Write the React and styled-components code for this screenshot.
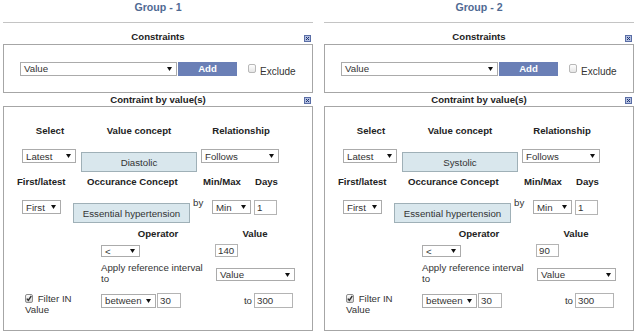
import styled, { createGlobalStyle } from 'styled-components';

const Global = createGlobalStyle`
  html, body { margin: 0; padding: 0; background: #fff; }
  body { font-family: "Liberation Sans", Arial, sans-serif; color: #222; }
`;

const Page = styled.div`
  display: flex;
  gap: 11px;
  padding-left: 3px;
  width: 636px;
  height: 333px;
  box-sizing: border-box;
  overflow: hidden;
`;

const Panel = styled.section`
  width: 310px;
  display: flex;
  flex-direction: column;
`;

const GroupTitle = styled.h2`
  margin: 0;
  height: 23px;
  box-sizing: border-box;
  border-bottom: 1px solid #c4c4c4;
  text-align: center;
  font-size: 10.6px;
  line-height: 14px;
  font-weight: bold;
  color: #4f6a93;
`;

const SectionHead = styled.div`
  position: relative;
  height: ${p => p.$h}px;
  display: flex;
  align-items: flex-end;
  justify-content: center;
  font-size: 9.6px;
  font-weight: bold;
  line-height: ${p => Math.min(p.$h, 14)}px;
  color: #222;
`;

const Close = styled.span`
  position: absolute;
  right: 2px;
  bottom: 5px;
  width: 7px;
  height: 7px;
  display: block;
`;

const Box = styled.div`
  height: ${p => p.$h}px;
  box-sizing: border-box;
  border: 1px solid #a6a6a6;
`;

const ConstraintBar = styled.div`
  height: 100%;
  display: flex;
  align-items: center;
  padding-left: 16px;
`;

const SelectBox = styled.div`
  grid-column: ${p => p.$col || 'auto'};
  width: ${p => p.$w}px;
  height: ${p => p.$h || 14}px;
  margin-top: ${p => p.$mt || 0}px;
  margin-left: ${p => p.$ml || 0}px;
  box-sizing: border-box;
  border: 1px solid #ababab;
  background: #fff;
  display: flex;
  align-items: center;
  justify-content: space-between;
  padding: 0 4px 0 3px;
  font-size: 9.7px;
  color: #333;
  svg { flex: none; }
`;

const AddButton = styled.button`
  width: 59px;
  height: 14px;
  margin-left: 1px;
  padding: 0;
  border: none;
  background: #6a7fb6;
  color: #fff;
  font-family: inherit;
  font-weight: bold;
  font-size: 9.6px;
`;

const Tick = styled.span`
  display: inline-block;
  vertical-align: -1px;
  width: 8px;
  height: 9px;
  margin-left: ${p => p.$ml || 0}px;
  margin-right: ${p => p.$mr || 0}px;
  flex: none;
  svg { display: block; }
`;

const Exclude = styled.span`
  margin: 5px 0 0 4px;
  font-size: 10px;
  color: #333;
`;

const ValueBox = styled.div`
  height: 225px;
  box-sizing: border-box;
  border: 1px solid #a6a6a6;
  padding-top: 17px;
`;

const Cells = styled.div`
  display: grid;
  grid-template-columns: ${p => p.$cols};
  align-items: start;
  height: ${p => p.$h}px;
  margin-top: ${p => p.$mt || 0}px;
  padding-left: ${p => p.$pl || 0}px;
`;

const Heading = styled.span`
  grid-column: ${p => p.$col || 'auto'};
  text-align: ${p => p.$align || 'left'};
  font-size: 9.6px;
  font-weight: bold;
  line-height: 14px;
  color: #222;
  white-space: nowrap;
`;

const Concept = styled.div`
  width: ${p => p.$w}px;
  height: 20px;
  margin-top: 3px;
  box-sizing: border-box;
  border: 1px solid #9fb0b7;
  background: #d9e7ed;
  display: flex;
  align-items: center;
  justify-content: center;
  font-size: 9.7px;
  color: #333;
`;

const By = styled.span`
  margin-top: -3px;
  font-size: 9.7px;
  line-height: 12px;
  color: #333;
`;

const Field = styled.input`
  grid-column: ${p => p.$col || 'auto'};
  width: ${p => p.$w}px;
  height: ${p => p.$h || 15}px;
  margin-left: ${p => p.$ml || 0}px;
  box-sizing: border-box;
  border: 1px solid #b4b4b4;
  padding: 0 2px;
  font-family: inherit;
  font-size: 9.7px;
  color: #333;
  outline: none;
`;

const Note = styled.span`
  grid-column: ${p => p.$col || 'auto'};
  max-width: ${p => p.$max ? `${p.$max}px` : 'none'};
  padding-left: ${p => p.$pl || 0}px;
  font-size: 9.7px;
  line-height: 11px;
  color: #333;
`;

const Pair = styled.div`
  grid-column: ${p => p.$col};
  display: flex;
  align-items: center;
  justify-content: ${p => p.$end ? 'flex-end' : 'flex-start'};
  padding-right: ${p => p.$end ? 2 : 0}px;
  gap: ${p => p.$gap || 0}px;
`;

const Arrow = () => (
  <svg width="5" height="4" viewBox="0 0 5 4">
    <polygon points="0,0 5,0 2.5,4" fill="#111" />
  </svg>
);

const CloseIcon = () => (
  <Close>
    <svg width="7" height="7" viewBox="0 0 7 7">
      <rect x="0.5" y="0.5" width="6" height="6" fill="#b3bfdf" stroke="#5a6ea6" />
      <path d="M2 2 L5 5 M5 2 L2 5" stroke="#1f3475" strokeWidth="1" />
    </svg>
  </Close>
);

const Select = ({ label, ...rest }) => (
  <SelectBox {...rest}>
    <span>{label}</span>
    <Arrow />
  </SelectBox>
);

const Checkbox = ({ checked, ml, mr }) => (
  <Tick $ml={ml} $mr={mr}>
    <svg width="8" height="9" viewBox="0 0 8 9">
      <defs>
        <linearGradient id={checked ? 'cbOn' : 'cbOff'} x1="0" y1="0" x2="0" y2="1">
          <stop offset="0" stopColor="#ffffff" />
          <stop offset="1" stopColor={checked ? '#cfcfcf' : '#e4e4e4'} />
        </linearGradient>
      </defs>
      <rect x="0.5" y="0.5" width="7" height="8" rx="1.5"
        fill={`url(#${checked ? 'cbOn' : 'cbOff'})`} stroke={checked ? '#8e8e8e' : '#b8b8b8'} />
      {checked && <path d="M1.8 4.6 L3.3 6.3 L6.3 2" fill="none" stroke="#333" strokeWidth="1.4" />}
    </svg>
  </Tick>
);

const Group = ({ n, concept, value }) => (
  <Panel>
    <GroupTitle>Group - {n}</GroupTitle>

    <SectionHead $h={21}>Constraints<CloseIcon /></SectionHead>
    <Box $h={49}>
      <ConstraintBar>
        <Select label="Value" $w={157} />
        <AddButton>Add</AddButton>
        <Checkbox ml={11} />
        <Exclude>Exclude</Exclude>
      </ConstraintBar>
    </Box>

    <SectionHead $h={13}>Contraint by value(s)<CloseIcon /></SectionHead>
    <ValueBox>
      <Cells $cols="92px 86px 118px" $h={14}>
        <Heading $align="center">Select</Heading>
        <Heading $align="center">Value concept</Heading>
        <Heading $align="center">Relationship</Heading>
      </Cells>

      <Cells $cols="59px 120px 78px" $pl={18} $mt={11} $h={23}>
        <Select label="Latest" $w={54} />
        <Concept $w={116}>{concept}</Concept>
        <Select label="Follows" $w={78} />
      </Cells>

      <Cells $cols="70px 116px 52px auto" $pl={13} $mt={3} $h={14}>
        <Heading>First/latest</Heading>
        <Heading>Occurance Concept</Heading>
        <Heading>Min/Max</Heading>
        <Heading>Days</Heading>
      </Cells>

      <Cells $cols="51px 120px 19px 42px auto" $pl={18} $mt={11} $h={23}>
        <Select label="First" $w={39} />
        <Concept $w={117}>Essential hypertension</Concept>
        <By>by</By>
        <Select label="Min" $w={39} />
        <Field $w={23} defaultValue="1" readOnly />
      </Cells>

      <Cells $cols="97px 114px 80px" $mt={4} $h={14}>
        <Heading $col={2} $align="center">Operator</Heading>
        <Heading $col={3} $align="center">Value</Heading>
      </Cells>

      <Cells $cols="97px 114px 80px" $mt={3} $h={13}>
        <Select label="<" $col={2} $w={39} $h={12} $mt={1} />
        <Field $col={3} $w={23} $h={13} defaultValue={value} readOnly />
      </Cells>

      <Cells $cols="97px 114px 80px" $mt={5} $h={22}>
        <Note $col={2} $max={106}>Apply reference interval to</Note>
        <Select label="Value" $w={79} $h={13} $mt={6} $ml={1} />
      </Cells>

      <Cells $cols="97px 114px 80px" $mt={9} $h={22}>
        <Note $pl={21} $max={72}>
          <Checkbox checked mr={2} /> Filter IN Value
        </Note>
        <Pair $col={2} $gap={1}>
          <Select label="between" $w={55} />
          <Field $w={24} defaultValue="30" readOnly />
        </Pair>
        <Pair $col={3} $end $gap={2}>
          <Note>to</Note>
          <Field $w={39} defaultValue="300" readOnly />
        </Pair>
      </Cells>
    </ValueBox>
  </Panel>
);

export default function App() {
  return (
    <>
      <Global />
      <Page>
        <Group n={1} concept="Diastolic" value="140" />
        <Group n={2} concept="Systolic" value="90" />
      </Page>
    </>
  );
}
